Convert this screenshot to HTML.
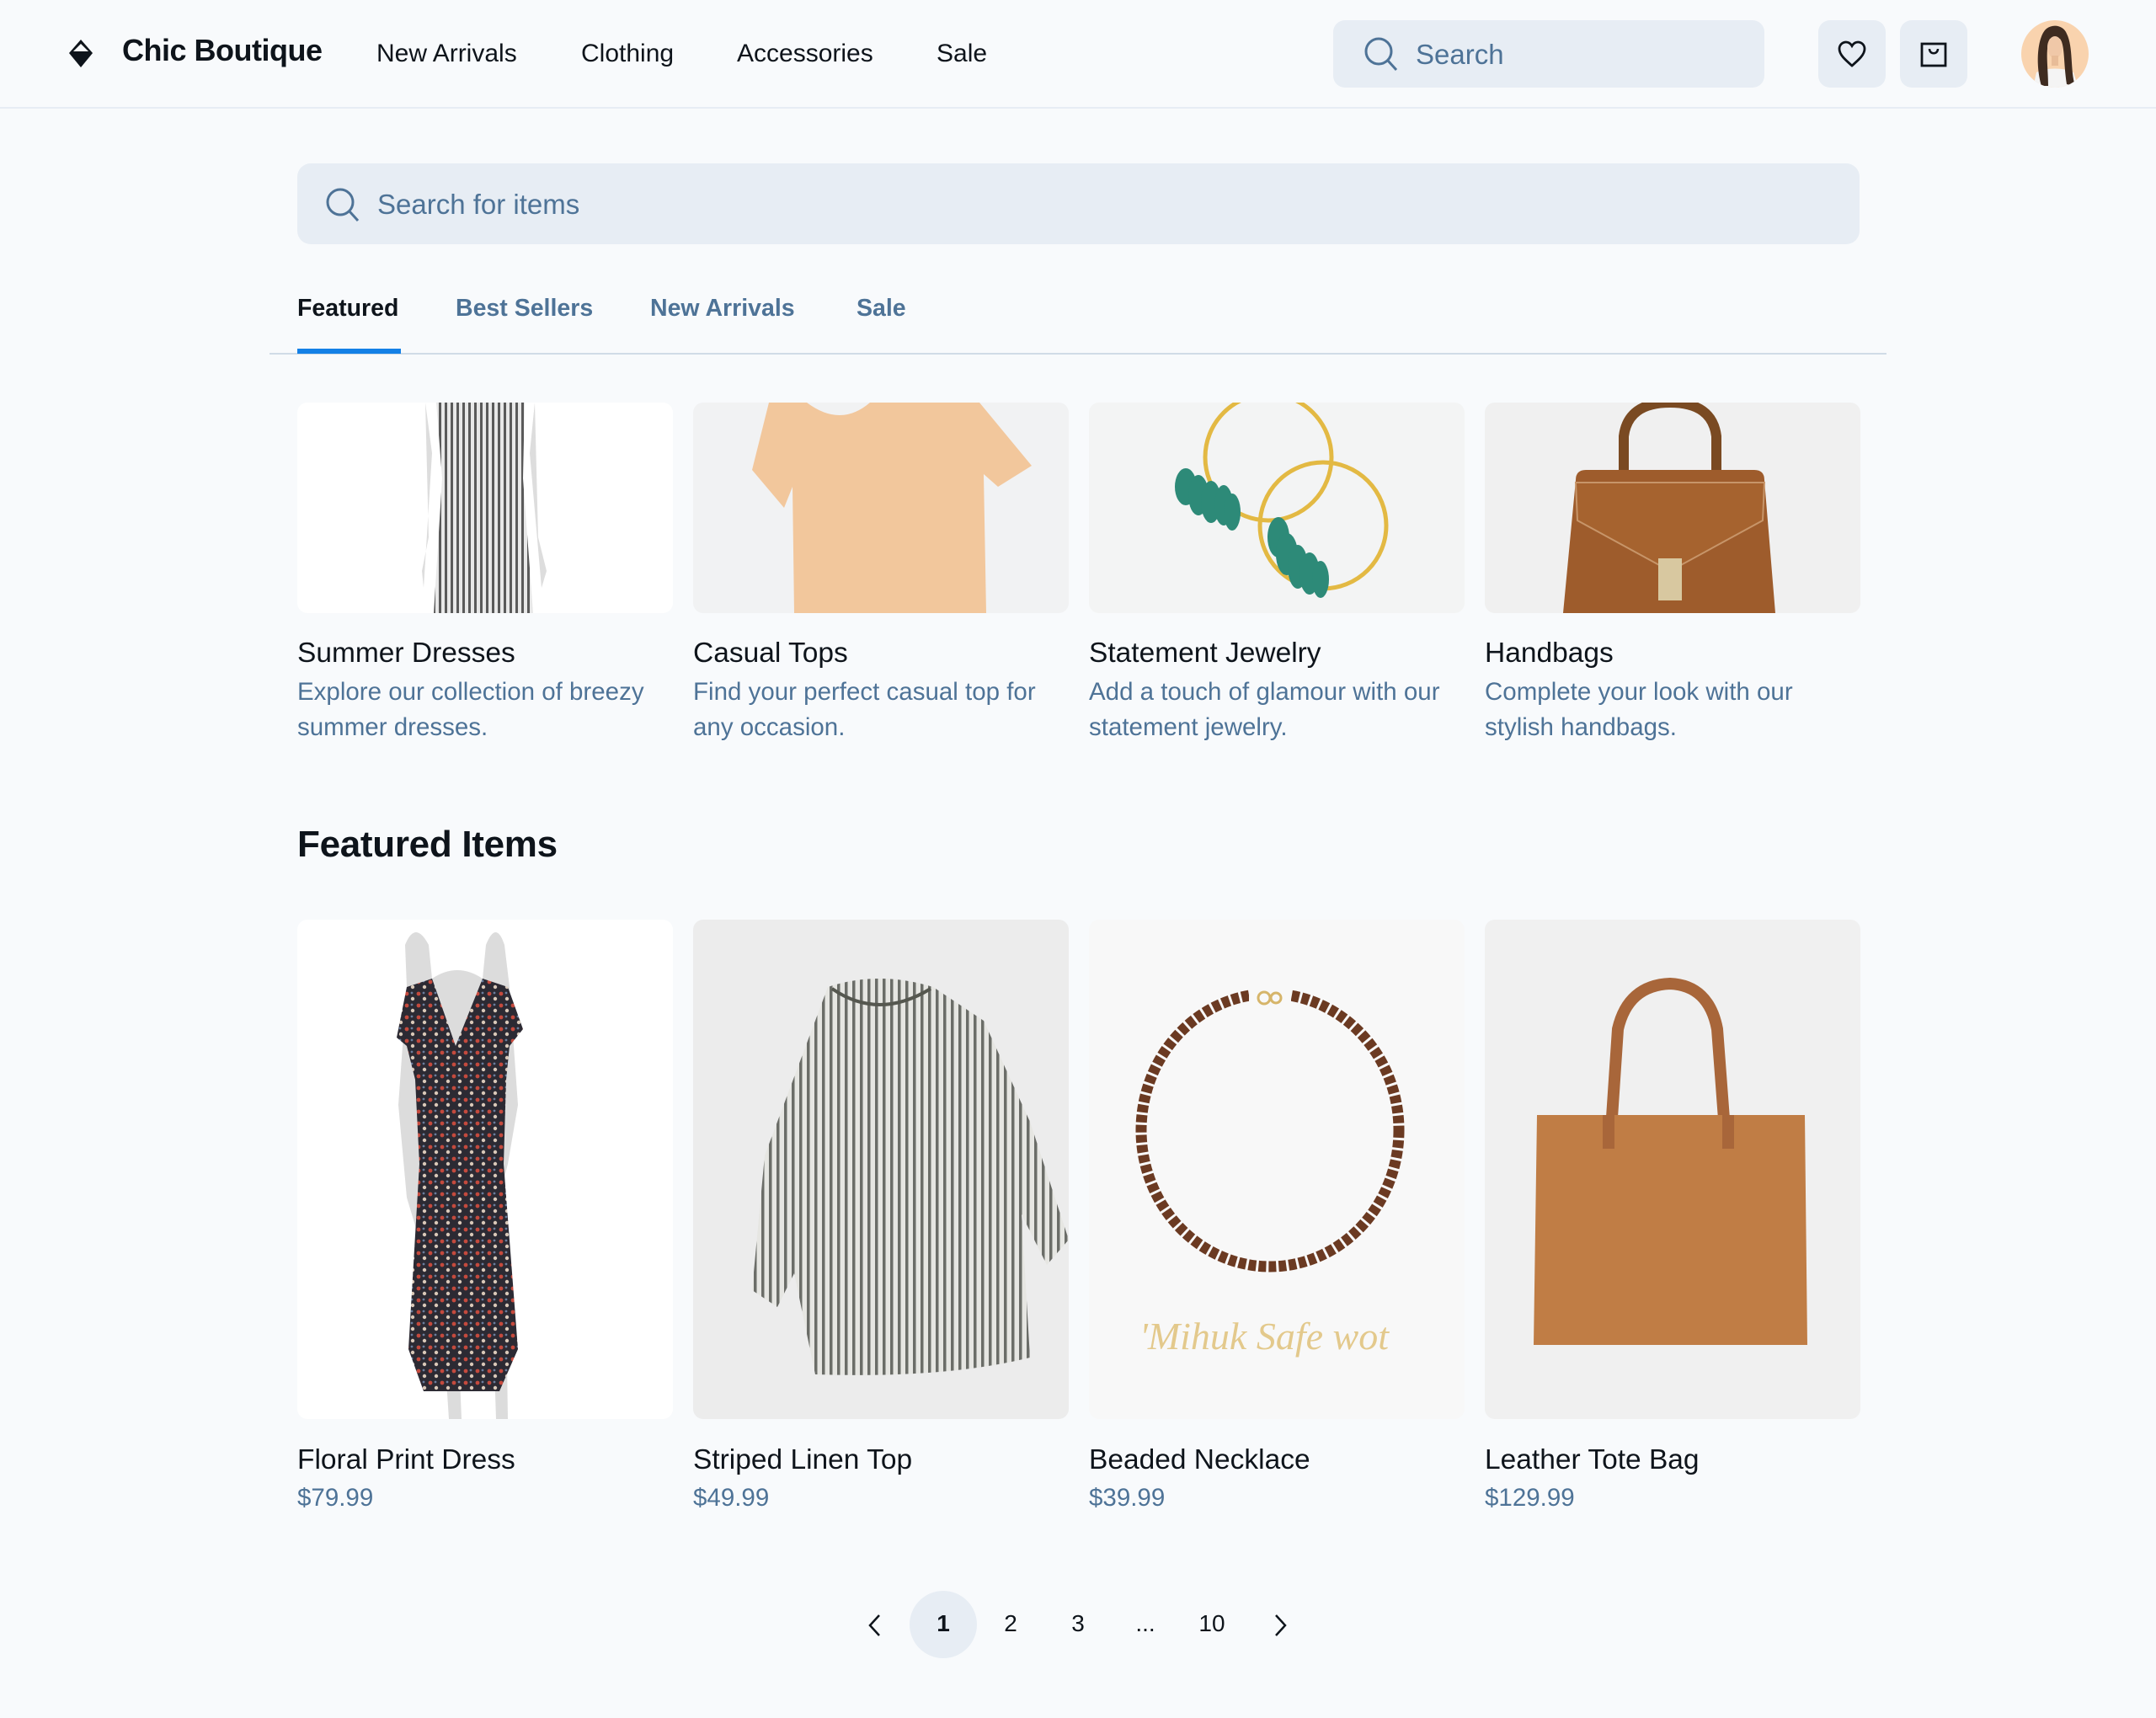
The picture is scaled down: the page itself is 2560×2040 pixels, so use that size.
<!DOCTYPE html>
<html><head><meta charset="utf-8"><style>
*{margin:0;padding:0;box-sizing:border-box}
body{width:2560px;height:2040px;background:#f8fafc;font-family:"Liberation Sans",sans-serif;color:#0e141b;position:relative;overflow:hidden}
.a{position:absolute;white-space:nowrap}
.nav{font-size:30px;top:47px}
.tab{font-size:28.5px;font-weight:bold;top:350px;color:#4e7397}
.card{position:absolute;width:446px}
.ct{font-size:33.5px;top:0}
.cd{font-size:29.5px;color:#4e7397;line-height:42px}
.img{position:absolute;border-radius:12px;overflow:hidden}
.pg{font-size:28px;top:1912px;text-align:center;width:60px}
</style></head><body>
<!-- header -->
<svg class="a" style="left:80px;top:47px" width="32" height="33" viewBox="0 0 32 33"><path d="M16 0 L30 16 L16 33 L2 16 Z" fill="#0e141b"/><path d="M16 5 L25 14 L7 14 Z" fill="#f8fafc"/></svg>
<div class="a" style="left:145px;top:39px;font-size:36px;font-weight:bold;letter-spacing:-0.5px">Chic Boutique</div>
<div class="a nav" style="left:447px">New Arrivals</div>
<div class="a nav" style="left:690px">Clothing</div>
<div class="a nav" style="left:875px">Accessories</div>
<div class="a nav" style="left:1112px">Sale</div>
<div class="a" style="left:1583px;top:24px;width:512px;height:80px;background:#e7edf4;border-radius:14px"></div>
<svg class="a" style="left:1618px;top:42px" width="44" height="44" viewBox="0 0 44 44"><circle cx="19" cy="19" r="15" fill="none" stroke="#4e7397" stroke-width="3"/><path d="M30 30 L40 41" stroke="#4e7397" stroke-width="3"/></svg>
<div class="a" style="left:1681px;top:46px;font-size:33px;color:#4e7397">Search</div>
<div class="a" style="left:2159px;top:24px;width:80px;height:80px;background:#e7edf4;border-radius:14px"></div>
<svg class="a" style="left:2181px;top:47px" width="36" height="34" viewBox="0 0 36 34"><path d="M18 31 C10 24 3 18 3 11 C3 6 7 3 11 3 C14 3 16.5 5 18 7.5 C19.5 5 22 3 25 3 C29 3 33 6 33 11 C33 18 26 24 18 31 Z" fill="none" stroke="#0e141b" stroke-width="2.8"/></svg>
<div class="a" style="left:2256px;top:24px;width:80px;height:80px;background:#e7edf4;border-radius:14px"></div>
<svg class="a" style="left:2280px;top:49px" width="32" height="32" viewBox="0 0 32 32"><rect x="2" y="3" width="28" height="26" fill="none" stroke="#0e141b" stroke-width="2.8"/><path d="M11 9 C11 16 21 16 21 9" fill="none" stroke="#0e141b" stroke-width="2.5"/></svg>
<svg class="a" style="left:2400px;top:24px" width="80" height="80" viewBox="0 0 80 80"><clipPath id="av"><circle cx="40" cy="40" r="40"/></clipPath><g clip-path="url(#av)"><rect width="80" height="80" fill="#f9d3ae"/><path d="M14 80 L18 62 C28 56 52 56 62 62 L68 80 Z" fill="#f4f4f4"/><path d="M24 78 C16 50 20 18 30 10 C38 4 50 6 54 16 C62 32 58 60 64 78 L54 76 C50 50 52 30 46 22 L34 22 C28 34 32 56 32 78 Z" fill="#3e2b20"/><ellipse cx="40" cy="32" rx="9" ry="13" fill="#f0c8a8"/><rect x="36" y="42" width="8" height="12" fill="#e8bc98"/></g></svg>
<div class="a" style="left:0;top:127px;width:2560px;height:2px;background:#e7edf4"></div>
<!-- search -->
<div class="a" style="left:353px;top:194px;width:1855px;height:96px;background:#e7edf4;border-radius:16px"></div>
<svg class="a" style="left:385px;top:221px" width="44" height="44" viewBox="0 0 44 44"><circle cx="19" cy="19" r="15" fill="none" stroke="#4e7397" stroke-width="3"/><path d="M30 30 L40 41" stroke="#4e7397" stroke-width="3"/></svg>
<div class="a" style="left:448px;top:224px;font-size:33px;color:#4e7397">Search for items</div>
<!-- tabs -->
<div class="a tab" style="left:353px;color:#0e141b">Featured</div>
<div class="a tab" style="left:541px">Best Sellers</div>
<div class="a tab" style="left:772px">New Arrivals</div>
<div class="a tab" style="left:1017px">Sale</div>
<div class="a" style="left:320px;top:419px;width:1920px;height:2px;background:#d0dbe7"></div>
<div class="a" style="left:353px;top:414px;width:123px;height:6px;background:#1480e6"></div>
<!-- category images -->
<div class="img" style="left:353px;top:478px;width:446px;height:250px;background:#fff"><svg width="446" height="250"><defs><pattern id="st" width="7" height="10" patternUnits="userSpaceOnUse"><rect width="7" height="10" fill="#e8e8e8"/><rect width="3" height="10" fill="#5a5a5a"/></pattern></defs><path d="M152 0 L156 160 L148 200 L150 220 L160 60 Z" fill="#ddd"/><path d="M282 0 L286 160 L296 200 L290 220 L276 60 Z" fill="#ddd"/><path d="M165 0 L270 0 L268 90 L280 250 L162 250 L172 90 Z" fill="url(#st)"/></svg></div>
<div class="img" style="left:823px;top:478px;width:446px;height:250px;background:#f1f2f3"><svg width="446" height="250"><path d="M90 0 L135 0 Q175 30 210 0 L340 0 L402 75 L362 100 L345 85 L348 250 L120 250 L118 100 L108 125 L70 80 Z" fill="#f2c79c"/></svg></div>
<div class="img" style="left:1293px;top:478px;width:446px;height:250px;background:#f3f4f4"><svg width="446" height="250"><circle cx="213" cy="65" r="75" fill="none" stroke="#e3b943" stroke-width="5"/><circle cx="278" cy="146" r="75" fill="none" stroke="#e3b943" stroke-width="5"/><g fill="#2d8a78"><ellipse cx="115" cy="100" rx="13" ry="22"/><ellipse cx="130" cy="110" rx="12" ry="24"/><ellipse cx="145" cy="118" rx="12" ry="25"/><ellipse cx="160" cy="122" rx="11" ry="24"/><ellipse cx="170" cy="130" rx="10" ry="22"/><ellipse cx="225" cy="160" rx="13" ry="24"/><ellipse cx="235" cy="180" rx="13" ry="25"/><ellipse cx="248" cy="195" rx="12" ry="26"/><ellipse cx="262" cy="203" rx="12" ry="25"/><ellipse cx="275" cy="210" rx="10" ry="22"/></g></svg></div>
<div class="img" style="left:1763px;top:478px;width:446px;height:250px;background:#f0f0f0"><svg width="446" height="250"><path d="M165 85 L165 40 Q170 0 220 0 Q270 0 275 40 L275 85" fill="none" stroke="#7a4a22" stroke-width="12"/><path d="M108 92 Q108 80 120 80 L320 80 Q332 80 332 92 L345 250 L93 250 Z" fill="#9e5c2c"/><path d="M108 95 L332 95 L330 140 L220 200 L110 140 Z" fill="#a6632f" stroke="#c79569" stroke-width="2"/><rect x="206" y="185" width="28" height="50" fill="#d8c8a0"/></svg></div>
<!-- category text -->
<div class="card" style="left:353px;top:757px"><div class="ct">Summer Dresses</div><div class="cd" style="margin-top:6px">Explore our collection of breezy<br>summer dresses.</div></div>
<div class="card" style="left:823px;top:757px"><div class="ct">Casual Tops</div><div class="cd" style="margin-top:6px">Find your perfect casual top for<br>any occasion.</div></div>
<div class="card" style="left:1293px;top:757px"><div class="ct">Statement Jewelry</div><div class="cd" style="margin-top:6px">Add a touch of glamour with our<br>statement jewelry.</div></div>
<div class="card" style="left:1763px;top:757px"><div class="ct">Handbags</div><div class="cd" style="margin-top:6px">Complete your look with our<br>stylish handbags.</div></div>
<div class="a" style="left:353px;top:978px;font-size:44px;font-weight:bold;letter-spacing:-0.3px">Featured Items</div>
<!-- items -->
<div class="img" style="left:353px;top:1092px;width:446px;height:593px;background:#fff"><svg width="446" height="593"><defs><pattern id="fl" width="14" height="14" patternUnits="userSpaceOnUse"><rect width="14" height="14" fill="#2c2a33"/><circle cx="4" cy="4" r="2.4" fill="#c44a3e"/><circle cx="11" cy="10" r="2.2" fill="#d9c8b8"/><circle cx="10" cy="3" r="1.4" fill="#6a7e9e"/></pattern></defs><path d="M128 30 Q140 0 156 30 L160 70 Q190 50 220 70 L224 30 Q236 0 246 30 L252 80 L262 220 L250 290 L240 330 L248 460 L250 593 L236 593 L232 470 L190 470 L195 593 L180 593 L172 470 L130 330 L120 220 L130 80 Z" fill="#dcdcdc"/><path d="M130 80 L160 70 L188 150 L220 70 L250 80 L268 130 L252 150 L248 190 L245 290 L262 510 L240 560 L150 560 L132 510 L145 290 L140 190 L130 150 L118 140 Z" fill="url(#fl)"/></svg></div>
<div class="img" style="left:823px;top:1092px;width:446px;height:593px;background:#ececec"><svg width="446" height="593"><defs><pattern id="s2" width="9" height="10" patternUnits="userSpaceOnUse"><rect width="9" height="10" fill="#e6e6e2"/><rect width="3.5" height="10" fill="#6b6d68"/></pattern></defs><path d="M160 80 Q220 60 285 80 L345 120 L400 240 L446 380 L420 410 L390 350 L400 520 Q300 545 145 540 L120 420 L100 460 L70 440 L85 280 Z" fill="url(#s2)"/><path d="M165 82 Q220 120 282 82" fill="none" stroke="#55574f" stroke-width="4"/></svg></div>
<div class="img" style="left:1293px;top:1092px;width:446px;height:593px;background:#f8f8f8"><svg width="446" height="593"><ellipse cx="215" cy="250" rx="153" ry="162" fill="none" stroke="#6b3a22" stroke-width="13" stroke-dasharray="9 3"/><rect x="190" y="80" width="50" height="28" fill="#f8f8f8"/><circle cx="208" cy="93" r="7" fill="none" stroke="#d6b56a" stroke-width="3"/><circle cx="222" cy="93" r="6" fill="none" stroke="#d6b56a" stroke-width="3"/><text x="60" y="510" font-family="Liberation Serif,serif" font-style="italic" font-size="46" fill="#e3c98c">'Mihuk Safe wot</text></svg></div>
<div class="img" style="left:1763px;top:1092px;width:446px;height:593px;background:#f0f0f0"><svg width="446" height="593"><path d="M150 250 L158 130 Q170 78 220 76 Q266 78 276 130 L285 250" fill="none" stroke="#a8663a" stroke-width="14"/><path d="M62 232 L380 232 L383 505 L58 505 Z" fill="#c07d45"/><rect x="140" y="232" width="14" height="40" fill="#a8663a"/><rect x="282" y="232" width="14" height="40" fill="#a8663a"/></svg></div>
<div class="card" style="left:353px;top:1715px"><div class="ct">Floral Print Dress</div><div class="cd" style="margin-top:5px">$79.99</div></div>
<div class="card" style="left:823px;top:1715px"><div class="ct">Striped Linen Top</div><div class="cd" style="margin-top:5px">$49.99</div></div>
<div class="card" style="left:1293px;top:1715px"><div class="ct">Beaded Necklace</div><div class="cd" style="margin-top:5px">$39.99</div></div>
<div class="card" style="left:1763px;top:1715px"><div class="ct">Leather Tote Bag</div><div class="cd" style="margin-top:5px">$129.99</div></div>
<!-- pagination -->
<svg class="a" style="left:1029px;top:1916px" width="20" height="28" viewBox="0 0 20 28"><path d="M15 2 L4 14 L15 26" fill="none" stroke="#0e141b" stroke-width="2.5"/></svg>
<div class="a" style="left:1080px;top:1889px;width:80px;height:80px;border-radius:50%;background:#e7edf4"></div>
<div class="a pg" style="left:1090px;font-weight:bold">1</div>
<div class="a pg" style="left:1170px">2</div>
<div class="a pg" style="left:1250px">3</div>
<div class="a pg" style="left:1330px">...</div>
<div class="a pg" style="left:1409px">10</div>
<svg class="a" style="left:1510px;top:1916px" width="20" height="28" viewBox="0 0 20 28"><path d="M5 2 L16 14 L5 26" fill="none" stroke="#0e141b" stroke-width="2.5"/></svg>
</body></html>
